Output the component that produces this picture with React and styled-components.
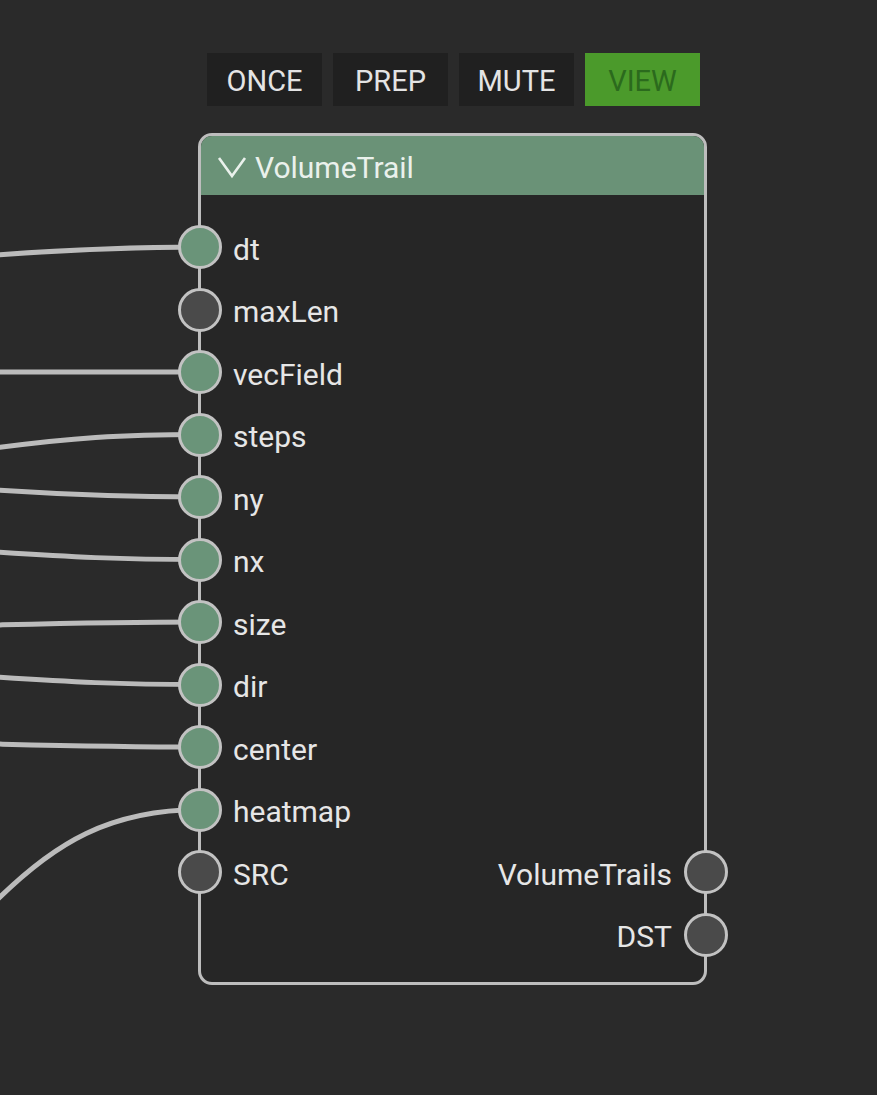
import styled, { createGlobalStyle } from "styled-components";

const GlobalStyle = createGlobalStyle`
  body {
    margin: 0;
    background: #2a2a2a;
    font-family: Roboto, "Noto Sans", sans-serif;
  }
`;

const Canvas = styled.div`
  position: relative;
  width: 877px;
  height: 1095px;
  background: #2a2a2a;
  overflow: hidden;
`;

const Wires = styled.svg`
  position: absolute;
  left: 0;
  top: 0;
`;

const NodeFrame = styled.div`
  position: absolute;
  left: 198px;
  top: 53px;
  width: 509px;
  display: flex;
  flex-direction: column;
  gap: 27px;
`;

const Toolbar = styled.div`
  display: flex;
  gap: 11px;
  padding-left: 9px;
`;

const ToolButton = styled.div`
  width: 115px;
  height: 53px;
  padding-top: 2px;
  box-sizing: border-box;
  display: flex;
  align-items: center;
  justify-content: center;
  background: ${(p) => (p.$active ? "#4b9a2b" : "#202020")};
  color: ${(p) => (p.$active ? "#2b6a1d" : "#e4e4e4")};
  font-size: 29px;
`;

const Node = styled.div`
  box-sizing: border-box;
  height: 852px;
  border: 3px solid #bdbdbd;
  border-radius: 14px;
  background: #262626;
  display: flex;
  flex-direction: column;
`;

const Header = styled.div`
  box-sizing: border-box;
  height: 59px;
  padding: 3px 0 0 16px;
  display: flex;
  align-items: center;
  gap: 8px;
  background: #6a9277;
  border-radius: 11px 11px 0 0;
  color: #eaf1ec;
  font-size: 30px;
`;

const Ports = styled.div`
  padding-top: 21px;
  display: flex;
  flex-direction: column;
`;

const Row = styled.div`
  position: relative;
  height: 62.5px;
  display: flex;
  align-items: center;
  justify-content: space-between;
  padding: 0 32px;
  color: #e6e6e6;
  font-size: 30px;
`;

const Label = styled.span`
  padding-top: 4px;
`;

const Socket = styled.span`
  position: absolute;
  top: 50%;
  ${(p) => (p.$side === "right" ? "right: -23.5px;" : "left: -23.5px;")}
  width: 38px;
  height: 38px;
  margin-top: -22px;
  border: 3px solid #c2c2c2;
  border-radius: 50%;
  background: ${(p) => (p.$linked ? "#6a9479" : "#4a4a4a")};
`;

const buttons = ["ONCE", "PREP", "MUTE", "VIEW"];

const rows = [
  { input: "dt", linked: true },
  { input: "maxLen" },
  { input: "vecField", linked: true },
  { input: "steps", linked: true },
  { input: "ny", linked: true },
  { input: "nx", linked: true },
  { input: "size", linked: true },
  { input: "dir", linked: true },
  { input: "center", linked: true },
  { input: "heatmap", linked: true },
  { input: "SRC", output: "VolumeTrails" },
  { output: "DST" },
];

const wires = [
  "M-5 255 C 80 249, 130 247, 200 247",
  "M-5 372 L 200 372",
  "M-5 448 C 70 438, 120 434.5, 200 434.5",
  "M-5 490 C 70 495, 120 497, 200 497",
  "M-5 552 C 70 557, 120 559.5, 200 559.5",
  "M-5 625 C 80 623, 120 622, 200 622",
  "M-5 677 C 70 682, 120 684.5, 200 684.5",
  "M-5 744 C 80 746, 120 747, 200 747",
  "M-5 902 C 55 842, 110 810, 200 809.5",
];

function Chevron() {
  return (
    <svg width="30" height="24" viewBox="0 0 30 24">
      <polyline
        points="2,3 15,21 28,3"
        fill="none"
        stroke="#eaf1ec"
        strokeWidth="2.6"
      />
    </svg>
  );
}

export default function App() {
  return (
    <>
      <GlobalStyle />
      <Canvas>
        <Wires width="877" height="1095">
          {wires.map((d, i) => (
            <path key={i} d={d} fill="none" stroke="#bbbbbb" strokeWidth="5" />
          ))}
        </Wires>
        <NodeFrame>
          <Toolbar>
            {buttons.map((b) => (
              <ToolButton key={b} $active={b === "VIEW"}>
                {b}
              </ToolButton>
            ))}
          </Toolbar>
          <Node>
            <Header>
              <Chevron />
              VolumeTrail
            </Header>
            <Ports>
              {rows.map((r, i) => (
                <Row key={i}>
                  {r.input && <Socket $linked={r.linked} />}
                  <Label>{r.input}</Label>
                  <Label>{r.output}</Label>
                  {r.output && <Socket $side="right" />}
                </Row>
              ))}
            </Ports>
          </Node>
        </NodeFrame>
      </Canvas>
    </>
  );
}
